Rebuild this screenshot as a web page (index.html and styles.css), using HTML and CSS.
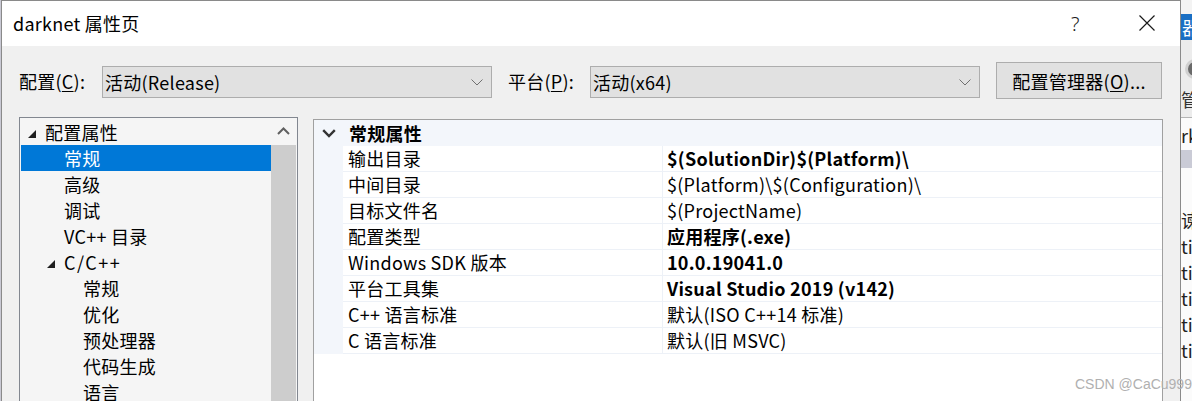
FILE: index.html
```html
<!DOCTYPE html>
<html lang="zh-CN">
<head>
<meta charset="utf-8">
<title>darknet 属性页</title>
<link rel="stylesheet" href="styles.css">
</head>
<body>
<div class="screen">
  <div class="edge-left"></div>
  <div class="dialog">
    <div class="titlebar">
      <span class="title">darknet 属性页</span>
      <div class="title-buttons">
        <span class="help">?</span>
        <span class="close"><svg width="16" height="16" viewBox="0 0 16 16"><path d="M0.5 0.5 L15.5 15.5 M15.5 0.5 L0.5 15.5" stroke="#1a1a1a" stroke-width="1.2" fill="none"/></svg></span>
      </div>
    </div>
    <div class="body">
      <div class="config-row">
        <span class="lbl lbl-config">配置(<u>C</u>):</span>
        <div class="combo"><span class="combo-text">活动(Release)</span><svg class="combo-arrow" width="12" height="7" viewBox="0 0 12 7"><path d="M0.5 0.5 L6 6 L11.5 0.5" stroke="#707070" stroke-width="1" fill="none"/></svg></div>
        <span class="lbl lbl-platform">平台(<u>P</u>):</span>
        <div class="combo"><span class="combo-text">活动(x64)</span><svg class="combo-arrow" width="12" height="7" viewBox="0 0 12 7"><path d="M0.5 0.5 L6 6 L11.5 0.5" stroke="#707070" stroke-width="1" fill="none"/></svg></div>
        <button class="btn">配置管理器(<u>O</u>)...</button>
      </div>
      <div class="panels">
        <div class="tree-panel">
          <ul class="tree">
            <li class="node lvl0"><svg class="tri" width="8" height="8" viewBox="0 0 8 8"><polygon points="8,0 8,8 0,8" fill="#1e1e1e"/></svg><span>配置属性</span></li>
            <li class="node lvl1 selected"><span>常规</span></li>
            <li class="node lvl1"><span>高级</span></li>
            <li class="node lvl1"><span>调试</span></li>
            <li class="node lvl1"><span>VC++ 目录</span></li>
            <li class="node lvl1x"><svg class="tri" width="8" height="8" viewBox="0 0 8 8"><polygon points="8,0 8,8 0,8" fill="#1e1e1e"/></svg><span class="cpp">C/C++</span></li>
            <li class="node lvl2"><span>常规</span></li>
            <li class="node lvl2"><span>优化</span></li>
            <li class="node lvl2"><span>预处理器</span></li>
            <li class="node lvl2"><span>代码生成</span></li>
            <li class="node lvl2"><span>语言</span></li>
          </ul>
          <div class="scrollbar">
            <div class="scroll-up"><svg width="13" height="8" viewBox="0 0 13 8"><path d="M1 7 L6.5 1.5 L12 7" stroke="#606060" stroke-width="2" fill="none"/></svg></div>
            <div class="thumb"></div>
          </div>
        </div>
        <div class="grid-panel">
          <div class="grid-header">
            <svg class="hdr-chevron" width="14" height="9" viewBox="0 0 14 9"><path d="M1.2 1.2 L7 7 L12.8 1.2" stroke="#333" stroke-width="2.4" fill="none"/></svg>
            <span class="hdr-text">常规属性</span>
          </div>
          <div class="grid-body">
            <div class="gutter"></div>
            <div class="rows">
              <div class="row"><div class="name">输出目录</div><div class="value strong">$(SolutionDir)$(Platform)\</div></div>
              <div class="row"><div class="name">中间目录</div><div class="value">$(Platform)\$(Configuration)\</div></div>
              <div class="row"><div class="name">目标文件名</div><div class="value">$(ProjectName)</div></div>
              <div class="row"><div class="name">配置类型</div><div class="value strong">应用程序(.exe)</div></div>
              <div class="row"><div class="name">Windows SDK 版本</div><div class="value strong">10.0.19041.0</div></div>
              <div class="row"><div class="name">平台工具集</div><div class="value strong">Visual Studio 2019 (v142)</div></div>
              <div class="row"><div class="name">C++ 语言标准</div><div class="value">默认(ISO C++14 标准)</div></div>
              <div class="row"><div class="name">C 语言标准</div><div class="value">默认(旧 MSVC)</div></div>
            </div>
          </div>
        </div>
      </div>
    </div>
  </div>
  <div class="edge-right">
    <div class="er-top"></div>
    <div class="er-blue">器</div>
    <div class="er-gap"></div>
    <div class="er-icon"><span class="er-circle"></span></div>
    <div class="er-guan">管</div>
    <div class="er-rk">rk</div>
    <div class="er-band"></div>
    <div class="er-list">
      <div class="er-line">谏</div>
      <div class="er-line">tio</div>
      <div class="er-line">tio</div>
      <div class="er-line">tio</div>
      <div class="er-line">tio</div>
      <div class="er-line">tio</div>
    </div>
  </div>
  <div class="watermark">CSDN @CaCu999</div>
</div>
</body>
</html>
```

FILE: styles.css
```css
* { box-sizing: border-box; }
html, body { margin: 0; padding: 0; }
body {
  font-family: "Noto Sans CJK SC", "Noto Sans", sans-serif;
  font-size: 18px;
  letter-spacing: 0.25px;
  color: #000;
  background: #ffffff;
}
.screen {
  position: relative;
  width: 1192px;
  height: 401px;
  overflow: hidden;
  display: flex;
  background: #e9e9e9;
}
.edge-left {
  width: 1px;
  flex: none;
  background: #c9c9d4;
}
.dialog {
  width: 1180px;
  flex: none;
  height: 401px;
  border: 1px solid #8a8a8a;
  border-bottom: none;
  background: #f0f0f0;
  display: flex;
  flex-direction: column;
}
.titlebar {
  height: 45px;
  flex: none;
  background: #ffffff;
  display: flex;
  align-items: center;
  padding-left: 11px;
}
.title {
  font-size: 18px;
  line-height: 24px;
  margin-top: -2px;
}
.title-buttons {
  margin-left: auto;
  display: flex;
  align-items: center;
}
.help {
  font-family: "Noto Sans", sans-serif;
  font-weight: 300;
  font-size: 20px;
  color: #1a1a1a;
  width: 10px;
  margin-right: 58px;
  margin-top: -1px;
}
.close {
  display: flex;
  width: 16px;
  height: 16px;
  margin-right: 25px;
  margin-top: -2px;
}
.body {
  flex: 1;
  display: flex;
  flex-direction: column;
  padding: 16px 0 0 17px;
  overflow: hidden;
}
.config-row {
  display: flex;
  align-items: center;
  height: 37px;
  flex: none;
}
.lbl { line-height: 24px; }
.lbl-config { width: 83px; }
.lbl-platform { width: 82px; margin-left: 16px; }
u { text-underline-offset: 2px; text-decoration-thickness: 1px; }
.combo {
  width: 390px;
  height: 32px;
  margin-top: 2px;
  border: 1px solid #adadad;
  background: #e1e1e1;
  display: flex;
  align-items: center;
  padding-left: 2px;
  padding-right: 8px;
}
.combo-text { line-height: 24px; }
.combo-arrow { margin-left: auto; margin-top: 2px; }
.btn {
  margin-left: 16px;
  width: 166px;
  height: 37px;
  border: 1px solid #adadad;
  background: #e1e1e1;
  font: inherit;
  letter-spacing: inherit;
  color: #000;
  padding: 0;
  line-height: 24px;
}
.panels {
  display: flex;
  margin-top: 18px;
  flex: 1;
  align-items: flex-start;
}
.tree-panel {
  width: 279px;
  height: 300px;
  border: 1px solid #828790;
  background: #f5f5f5;
  display: flex;
}
.tree {
  list-style: none;
  margin: 0;
  padding: 1px 0 0 0;
  width: 251px;
  flex: none;
}
.node {
  height: 26px;
  display: flex;
  align-items: center;
  line-height: 24px;
  white-space: nowrap;
}
.node .tri { flex: none; margin-right: 9px; margin-top: 3px; }
.cpp { letter-spacing: 1.5px; }
.lvl0 { padding-left: 8px; }
.lvl1 { padding-left: 44px; }
.lvl1x { padding-left: 27px; }
.lvl2 { padding-left: 63px; }
.selected {
  background: #0078d7;
  color: #ffffff;
  margin-left: 1px;
  padding-left: 43px;
}
.scrollbar {
  width: 25px;
  flex: none;
  display: flex;
  flex-direction: column;
}
.scroll-up {
  height: 27px;
  display: flex;
  align-items: center;
  justify-content: center;
  padding-bottom: 2px;
}
.thumb {
  flex: 1;
  background: #cdcdcd;
}
.grid-panel {
  width: 850px;
  height: 300px;
  margin-left: 15px;
  margin-top: 2px;
  border: 1px solid #a0a0a0;
  background: #ffffff;
}
.grid-header {
  height: 26px;
  background: #f3f6fb;
  display: flex;
  align-items: center;
  padding-left: 8px;
}
.hdr-chevron { flex: none; margin-right: 13px; margin-top: 1px; }
.hdr-text { font-weight: bold; line-height: 24px; }
.grid-body {
  display: flex;
}
.gutter {
  width: 29px;
  background: #f3f6fb;
  flex: none;
}
.rows {
  flex: 1;
}
.row {
  height: 26px;
  display: flex;
  border-bottom: 1px solid #edf1f7;
}
.name {
  width: 320px;
  padding-left: 5px;
  border-right: 1px solid #edf1f7;
  line-height: 25px;
  white-space: nowrap;
}
.value {
  flex: 1;
  padding-left: 4px;
  line-height: 25px;
  white-space: nowrap;
}
.strong { font-weight: bold; }
.edge-right {
  flex: 1;
  display: flex;
  flex-direction: column;
  overflow: hidden;
  background: #f0f0f0;
  white-space: nowrap;
  font-size: 18px;
  letter-spacing: 0;
}
.er-top { height: 14px; background: #f3f3f3; }
.er-blue {
  height: 26px;
  background: #1a6fc4;
  color: #fff;
  line-height: 26px;
  padding-left: 1px;
}
.er-gap { height: 14px; background: #ececec; }
.er-icon { height: 30px; background: #ececec; display: flex; align-items: center; padding-left: 4px; }
.er-circle { width: 20px; height: 20px; border-radius: 50%; background: #6a6a6a; border: 3px solid #d0d0d0; flex: none; }
.er-guan {
  height: 34px;
  background: #ececec;
  line-height: 30px;
  color: #333;
  border-bottom: 1px solid #b4b4b4;
}
.er-rk { height: 32px; background: #fbfbfb; line-height: 34px; color: #222; }
.er-band { height: 18px; background: #cacbd6; }
.er-list { flex: 1; background: #fbfbfb; padding-top: 39px; }
.er-line { height: 26px; line-height: 26px; color: #222; }
.watermark {
  position: absolute;
  left: 1075px;
  top: 376px;
  font-family: "Liberation Sans", sans-serif;
  font-size: 14px;
  letter-spacing: 0;
  color: #b0b0b0;
  white-space: nowrap;
}
```
